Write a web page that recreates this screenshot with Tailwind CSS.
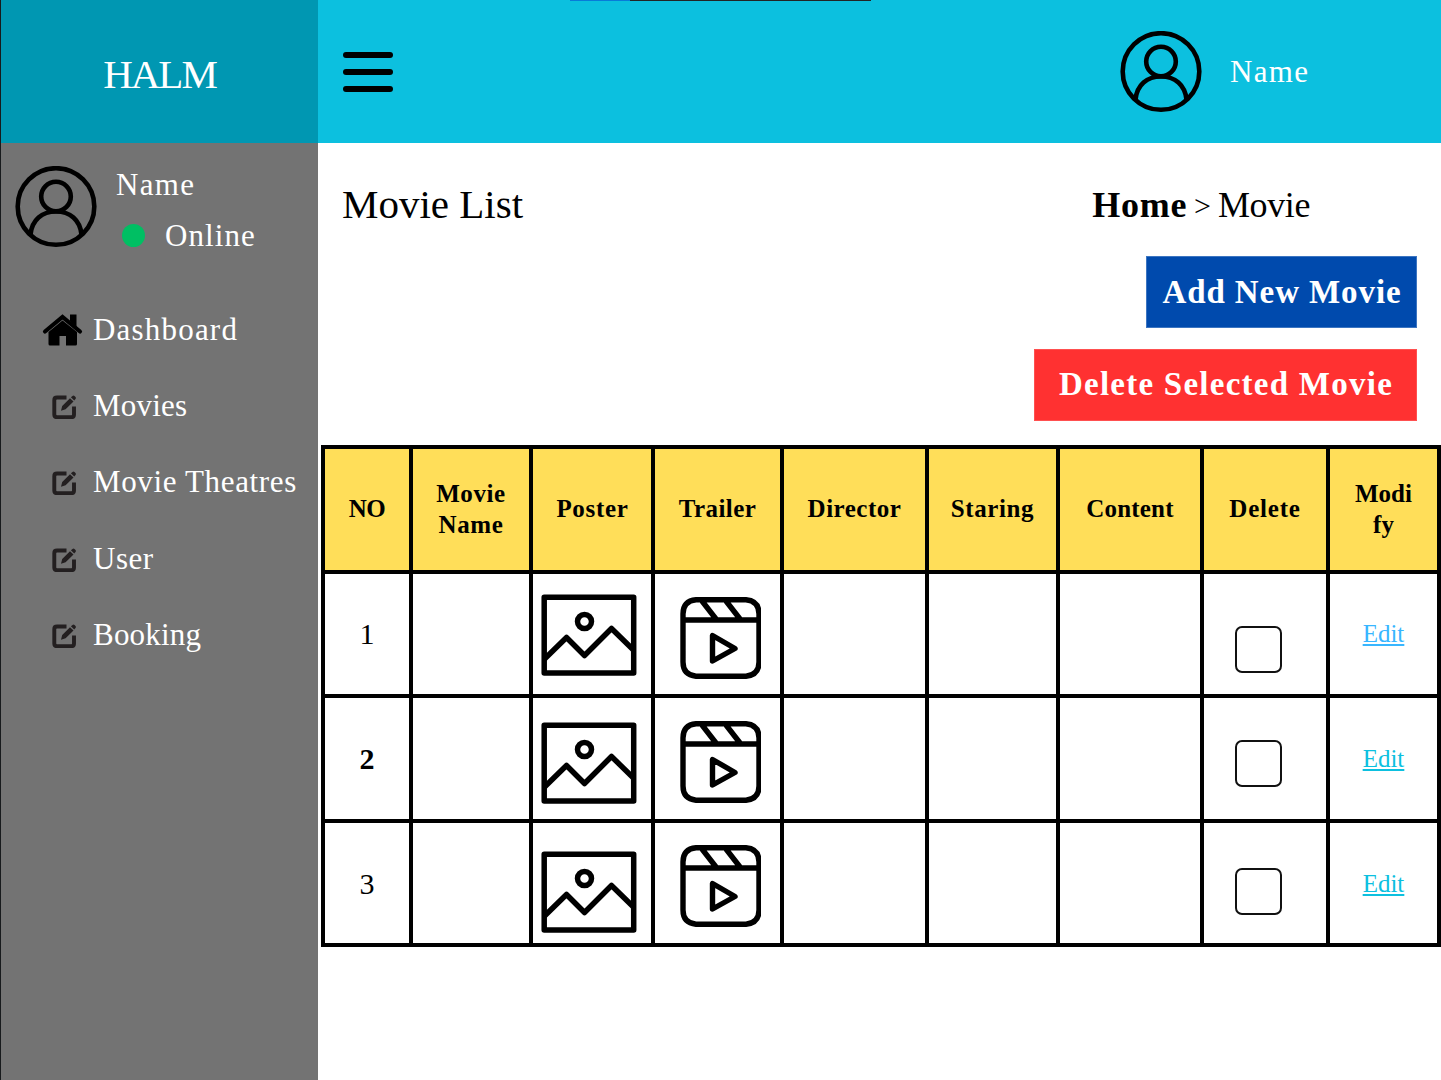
<!DOCTYPE html>
<html lang="en">
<head>
<meta charset="utf-8">
<title>Movie List</title>
<script src="https://cdn.jsdelivr.net/npm/@tailwindcss/browser@4"></script>
</head>
<body class="w-[1441px] h-[1080px] overflow-hidden bg-white font-['Liberation_Serif',serif] text-black">
<svg class="hidden">
  <symbol id="user" viewBox="0 0 82 82"><g fill="none" stroke="#000" stroke-width="4.6"><circle cx="41" cy="40.500" r="38.3"/><circle cx="41" cy="30.500" r="14.8"/><path d="M15.500 68.500C17 54 27 45.500 41 45.500S65 54 66.500 68.500"/></g></symbol>
  <symbol id="edit" viewBox="0 0 24 24"><path d="M14.500 2.500H5Q2.300 2.500 2.300 5V19.500Q2.300 22.200 5 22.200H19.500Q22 22.200 22 19.500V11.500" fill="none" stroke="#231f20" stroke-width="3.900"/><path d="M9 15.800L10.200 11L18 3.200L21.500 6.600L13.600 14.200ZM18.900 2.300L20.500 .9Q21.500 .2 22.500 1.100L23.500 2.100Q24.300 3.100 23.500 4L22.200 5.600Z" fill="#231f20"/></symbol>
  <symbol id="poster" viewBox="0 0 96 82"><g fill="none" stroke="#000" stroke-width="5.500" stroke-linejoin="round"><rect x="3.200" y="3.200" width="89.500" height="75.800"/><circle cx="43.500" cy="27.500" r="7"/><path d="M3.500 65L25.500 43.500L43.500 61.500L70.500 34.500L93 56.500"/></g></symbol>
  <symbol id="trailer" viewBox="0 0 81 82"><g fill="none" stroke="#000" stroke-width="5.400" stroke-linejoin="round"><path d="M16 2.800H66Q79 4 79 17V65Q79 78 66 79.200H16Q3 78 3 65V17Q3 4 16 2.800ZM3 23H79M22 4L36 22M46 4L60 22M32.500 38.500V64L55 51.500Z"/></g></symbol>
</svg>
<div class="flex h-full">
  <aside class="w-[318px] h-full shrink-0 bg-[#737373] border-l border-[#171a1c] text-white text-[31px] leading-[36px] whitespace-nowrap">
    <div class="h-[143px] bg-[#0097b2] flex items-center justify-center pt-1 text-[41px] tracking-[-2px]">HALM</div>
    <div class="flex h-[149px] pl-[14px] pt-[23px]">
      <svg class="w-[82px] h-[82px] shrink-0"><use href="#user"/></svg>
      <div class="pl-[19px] pt-[1px]">
        <div class="tracking-[1.3px]">Name</div>
        <div class="flex items-center pl-[6px] pt-[15px]"><span class="size-[23px] -mt-0.5 rounded-full bg-[#00bf63]"></span><span class="pl-5 tracking-[1.1px]">Online</span></div>
      </div>
    </div>
    <nav>
      <a class="flex h-[76.3px] items-center"><svg class="ml-[41px] mr-[10px] w-[41px] h-[34px] shrink-0" viewBox="0 0 41 34"><path d="M3 18.500L20.500 4L38 18.500" fill="none" stroke="#000" stroke-width="4.200" stroke-linecap="round"/><path d="M28 1.500H34.500V14L28 8ZM6.500 19L20.500 7.600L35 19V31Q35 32.500 33.500 32.500H24V23H17.500V32.500H8Q6.500 32.500 6.500 31Z"/></svg><span class="tracking-[1.2px]">Dashboard</span></a>
      <a class="flex h-[76.3px] items-center"><svg class="ml-[51px] mr-[17px] mt-px size-6 shrink-0"><use href="#edit"/></svg><span class="tracking-[0.2px]">Movies</span></a>
      <a class="flex h-[76.3px] items-center pb-px"><svg class="ml-[51px] mr-[17px] mt-px size-6 shrink-0"><use href="#edit"/></svg><span class="tracking-[0.65px]">Movie Theatres</span></a>
      <a class="flex h-[76.3px] items-center"><svg class="ml-[51px] mr-[17px] mt-px size-6 shrink-0"><use href="#edit"/></svg><span class="tracking-[0.5px]">User</span></a>
      <a class="flex h-[76.3px] items-center"><svg class="ml-[51px] mr-[17px] mt-px size-6 shrink-0"><use href="#edit"/></svg><span class="tracking-[0.2px]">Booking</span></a>
    </nav>
  </aside>
  <div class="flex-1 min-w-0">
    <header class="relative h-[143px] bg-[#0cc0df] flex items-center pl-[25px]">
      <div class="absolute top-0 left-[252px] flex h-px w-[301px] bg-[#222426]"><span class="w-[60px] bg-[#087bd8]"></span></div>
      <div class="flex flex-col gap-[11px] w-[50px]"><i class="h-[6px] rounded-full bg-black"></i><i class="h-[6px] rounded-full bg-black"></i><i class="h-[6px] rounded-full bg-black"></i></div>
      <svg class="ml-[727px] size-[82px]"><use href="#user"/></svg>
      <span class="pl-[28px] pt-0.5 text-[31px] tracking-[1.3px] text-white">Name</span>
    </header>
    <main>
      <div class="flex h-[113px] pl-6 pr-[131px] pt-[3px] items-center justify-between whitespace-nowrap">
        <h1 class="text-[41px] pt-2">Movie List</h1>
        <div class="flex items-center pt-2 text-[36px]"><b class="tracking-[0.7px]">Home</b><span class="pl-[7px] pr-[7px] text-[30px]">&gt;</span><span class="tracking-[-0.4px]">Movie</span></div>
      </div>
      <div class="flex flex-col items-end gap-[21px] pr-6 text-white text-[33px] font-bold whitespace-nowrap">
        <button class="w-[271px] h-[72px] pt-0.5 pl-px bg-[#004aad] border border-[#3c75c1] tracking-[0.9px]">Add New Movie</button>
        <button class="w-[383px] h-[72px] pl-px bg-[#ff3131] border border-[#ff5050] tracking-[1.25px]">Delete Selected Movie</button>
      </div>
      <div class="mt-6 ml-[3px] w-[1120px] h-[502px] bg-black p-1 grid gap-1 grid-cols-[84px_116px_118px_125px_141px_127px_140px_122px_107px] grid-rows-4 [&>*]:min-w-0 [&>*]:min-h-0 [&>*]:flex [&>*]:justify-center [&>*]:bg-white text-[25px] leading-[31px] text-center">
        <b class="items-center pb-0.5 bg-[#ffde59]! tracking-[-0.5px]">NO</b><b class="items-center bg-[#ffde59]! tracking-[0.6px]">Movie<br>Name</b><b class="items-center pb-0.5 bg-[#ffde59]! tracking-[0.7px] pl-px">Poster</b><b class="items-center pb-0.5 bg-[#ffde59]! tracking-[0.4px]">Trailer</b><b class="items-center pb-0.5 bg-[#ffde59]! tracking-[0.5px]">Director</b><b class="items-center pb-0.5 bg-[#ffde59]! tracking-[0.6px]">Staring</b><b class="items-center pb-0.5 bg-[#ffde59]! tracking-[0.2px]">Content</b><b class="items-center pb-0.5 bg-[#ffde59]! tracking-[0.8px]">Delete</b><b class="items-center bg-[#ffde59]!">Modi<br>fy</b>

        <div class="items-center text-[30px]">1</div><div></div><div class="pt-[20px] pr-[6px]"><svg class="w-[96px] h-[82px] shrink-0"><use href="#poster"/></svg></div><div class="pt-[23px] pl-[5px]"><svg class="w-[81px] h-[82px] shrink-0"><use href="#trailer"/></svg></div><div></div><div></div><div></div><div class="pt-[52px] pr-[14px]"><span class="size-[47px] rounded-[7px] border-2 border-[#111]"></span></div><div class="items-center text-[#38b6ff]"><a class="underline decoration-2 underline-offset-2">Edit</a></div>

        <div class="items-center text-[30px] font-bold">2</div><div></div><div class="pt-[24px] pr-[6px]"><svg class="w-[96px] h-[82px] shrink-0"><use href="#poster"/></svg></div><div class="pt-[23px] pl-[5px]"><svg class="w-[81px] h-[82px] shrink-0"><use href="#trailer"/></svg></div><div></div><div></div><div></div><div class="pt-[42px] pr-[14px]"><span class="size-[47px] rounded-[7px] border-2 border-[#111]"></span></div><div class="items-center text-[#0cc0df]"><a class="underline decoration-2 underline-offset-2">Edit</a></div>

        <div class="items-center pt-0.5 text-[30px]">3</div><div></div><div class="pt-[28px] pr-[6px]"><svg class="w-[96px] h-[82px] shrink-0"><use href="#poster"/></svg></div><div class="pt-[22.500px] pl-[5px]"><svg class="w-[81px] h-[82px] shrink-0"><use href="#trailer"/></svg></div><div></div><div></div><div></div><div class="pt-[45.500px] pr-[14px]"><span class="size-[47px] rounded-[7px] border-2 border-[#111]"></span></div><div class="items-center pt-0.5 text-[#0cc0df]"><a class="underline decoration-2 underline-offset-2">Edit</a></div>
      </div>
    </main>
  </div>
</div>
</body>
</html>
